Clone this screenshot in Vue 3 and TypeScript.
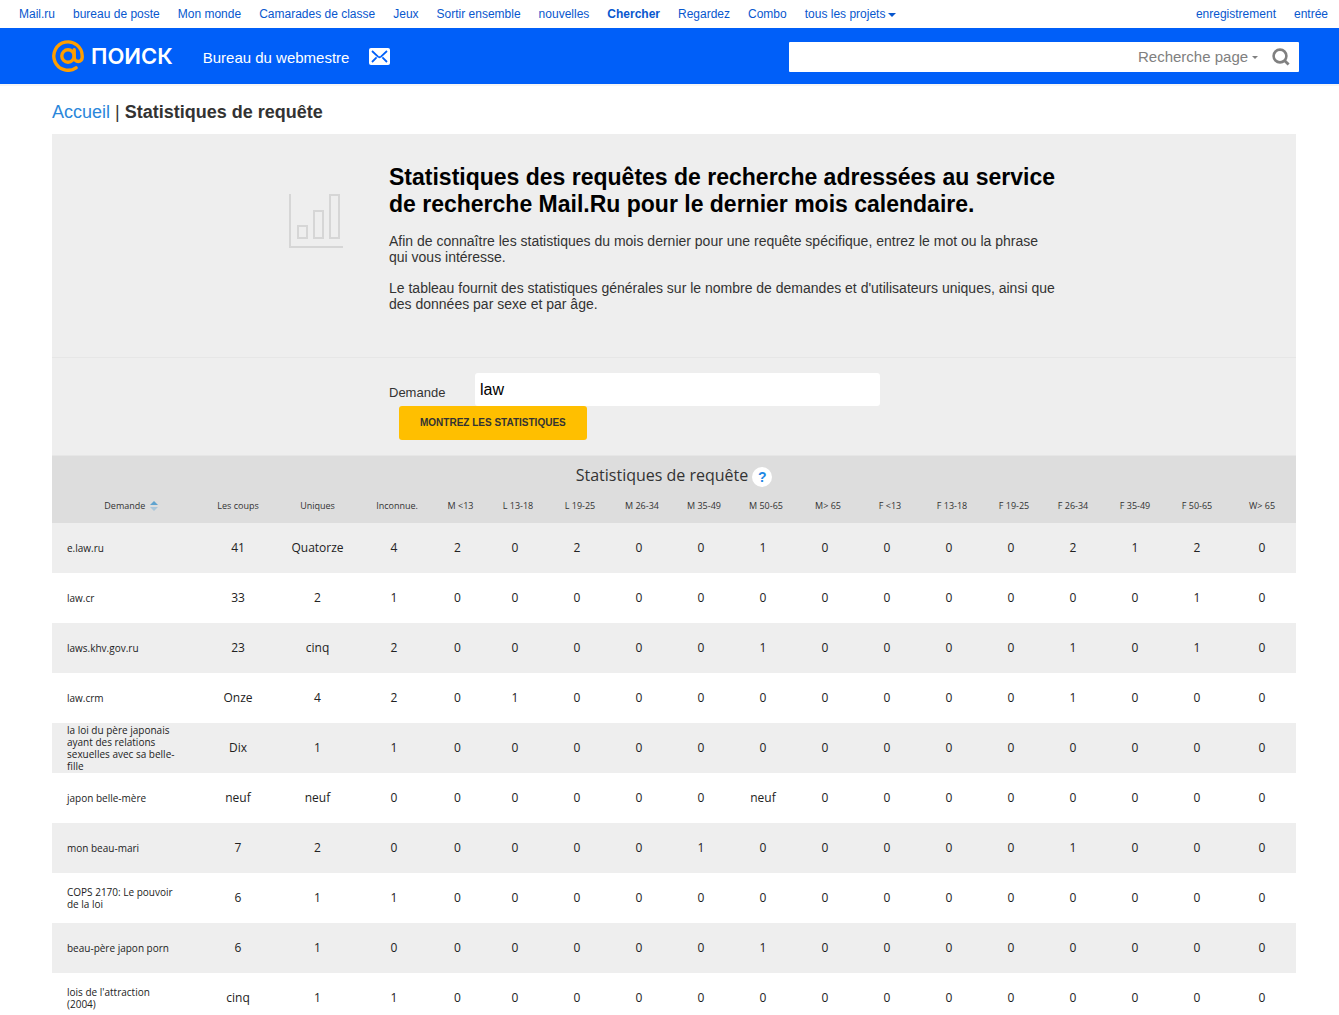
<script setup lang="ts">
import { ref } from 'vue'

const projects = ['Mail.ru', 'bureau de poste', 'Mon monde', 'Camarades de classe', 'Jeux', 'Sortir ensemble', 'nouvelles', 'Chercher', 'Regardez', 'Combo']
const account = ['enregistrement', 'entrée']

const scope = ref('page')
const search = ref('')
const query = ref('law')

const columns: { label: string; width: number; inset?: boolean }[] = [
  { label: 'Les coups', width: 80 },
  { label: 'Uniques', width: 79 },
  { label: 'Inconnue.', width: 74, inset: true },
  { label: 'M <13', width: 53, inset: true },
  { label: 'L 13-18', width: 62, inset: true },
  { label: 'L 19-25', width: 62, inset: true },
  { label: 'M 26-34', width: 62, inset: true },
  { label: 'M 35-49', width: 62, inset: true },
  { label: 'M 50-65', width: 62, inset: true },
  { label: 'M> 65', width: 62, inset: true },
  { label: 'F <13', width: 62, inset: true },
  { label: 'F 13-18', width: 62, inset: true },
  { label: 'F 19-25', width: 62, inset: true },
  { label: 'F 26-34', width: 62 },
  { label: 'F 35-49', width: 62 },
  { label: 'F 50-65', width: 62 },
  { label: 'W> 65', width: 68 },
]

const rows: { name: string; values: string[] }[] = [
  { name: 'e.law.ru', values: '41 Quatorze 4 2 0 2 0 0 1 0 0 0 0 2 1 2 0'.split(' ') },
  { name: 'law.cr', values: '33 2 1 0 0 0 0 0 0 0 0 0 0 0 0 1 0'.split(' ') },
  { name: 'laws.khv.gov.ru', values: '23 cinq 2 0 0 0 0 0 1 0 0 0 0 1 0 1 0'.split(' ') },
  { name: 'law.crm', values: 'Onze 4 2 0 1 0 0 0 0 0 0 0 0 1 0 0 0'.split(' ') },
  { name: 'la loi du père japonais ayant des relations sexuelles avec sa belle-fille', values: 'Dix 1 1 0 0 0 0 0 0 0 0 0 0 0 0 0 0'.split(' ') },
  { name: 'japon belle-mère', values: 'neuf neuf 0 0 0 0 0 0 neuf 0 0 0 0 0 0 0 0'.split(' ') },
  { name: 'mon beau-mari', values: '7 2 0 0 0 0 0 1 0 0 0 0 0 1 0 0 0'.split(' ') },
  { name: 'COPS 2170: Le pouvoir de la loi', values: '6 1 1 0 0 0 0 0 0 0 0 0 0 0 0 0 0'.split(' ') },
  { name: 'beau-père japon porn', values: '6 1 0 0 0 0 0 0 1 0 0 0 0 0 0 0 0'.split(' ') },
  { name: "lois de l'attraction (2004)", values: 'cinq 1 1 0 0 0 0 0 0 0 0 0 0 0 0 0 0'.split(' ') },
]
</script>

<template>
  <div class="page">
    <nav class="portal">
      <a v-for="p in projects" :key="p" href="#" :class="{ current: p === 'Chercher' }">{{ p }}</a>
      <a href="#" class="all">tous les projets<svg width="8" height="4" viewBox="0 0 8 4" aria-hidden="true"><path d="M0 0h8L4 4z" fill="currentColor" /></svg></a>
      <span class="spacer"></span>
      <a v-for="a in account" :key="a" href="#">{{ a }}</a>
    </nav>

    <header class="top">
      <a href="#" class="logo">
        <svg width="32" height="32" viewBox="0 0 32 32" fill="none" stroke="#ff9e00" stroke-width="3.4" aria-hidden="true">
          <circle cx="16" cy="16" r="6.2" />
          <path d="M22.2 9.8V17.5a4 4 0 0 0 8 0V16A14.2 14.2 0 1 0 24 27.8" stroke-linecap="round" />
        </svg>
        <span>ПОИСК</span>
      </a>
      <a href="#" class="product">Bureau du webmestre</a>
      <a href="#" class="mail" aria-label="Courrier">
        <svg width="22" height="17" viewBox="0 0 22 17" aria-hidden="true">
          <rect x="0" y="0" width="21" height="17" rx="2" fill="#fff" />
          <path d="M3 3l6 5.6q1.5 1.2 3 0L18 3M3 14l4.6-4.6M18 14l-4.6-4.6" fill="none" stroke="#005ff9" stroke-width="1.8" />
        </svg>
      </a>
      <form class="search" role="search" @submit.prevent>
        <input v-model="search" type="text" aria-label="Recherche" />
        <label class="scope">
          <select v-model="scope" aria-label="Type de recherche">
            <option value="page">Recherche page</option>
          </select>
          <svg width="6" height="3" viewBox="0 0 6 3" aria-hidden="true"><path d="M0 0h6L3 3z" fill="#808080" /></svg>
        </label>
        <button type="submit" aria-label="Chercher">
          <svg width="18" height="18" viewBox="0 0 18 18" fill="none" stroke="#808080" aria-hidden="true">
            <circle cx="8" cy="8" r="6.4" stroke-width="2.6" />
            <path d="M12 12l4.6 4.6" stroke-width="2.8" />
          </svg>
        </button>
      </form>
    </header>

    <main>
      <div class="crumbs"><a href="#">Accueil</a> | <strong>Statistiques de requête</strong></div>

      <section class="intro">
        <svg class="chart" width="54" height="54" viewBox="0 0 54 54" fill="none" stroke="#d6d6d6" stroke-width="2" aria-hidden="true">
          <path d="M1 0v53h53" />
          <rect x="9" y="32" width="9" height="12" />
          <rect x="25" y="17" width="9" height="27" />
          <rect x="41" y="1" width="9" height="43" />
        </svg>
        <div class="copy">
          <h1>Statistiques des requêtes de recherche adressées au service de recherche Mail.Ru pour le dernier mois calendaire.</h1>
          <p>Afin de connaître les statistiques du mois dernier pour une requête spécifique, entrez le mot ou la phrase qui vous intéresse.</p>
          <p>Le tableau fournit des statistiques générales sur le nombre de demandes et d'utilisateurs uniques, ainsi que des données par sexe et par âge.</p>
        </div>
      </section>

      <form class="ask" @submit.prevent>
        <div class="field">
          <label for="query">Demande</label>
          <input id="query" v-model="query" type="text" />
        </div>
        <button type="submit">MONTREZ LES STATISTIQUES</button>
      </form>

      <table>
        <caption>
          <div class="title">
            <span>Statistiques de requête</span>
            <button type="button" aria-label="Aide">?</button>
          </div>
        </caption>
        <colgroup>
          <col class="name" />
          <col v-for="c in columns" :key="c.label" :style="{ width: c.width + 'px' }" />
        </colgroup>
        <thead>
          <tr>
            <th scope="col" class="first">
              Demande
              <svg width="8" height="10" viewBox="0 0 8 10" aria-hidden="true">
                <path d="M0 4h8L4 0z" fill="#5fa3cf" />
                <path d="M0 6h8L4 10z" fill="#a9c6da" />
              </svg>
            </th>
            <th v-for="c in columns" :key="c.label" scope="col" :class="{ inset: c.inset }">{{ c.label }}</th>
          </tr>
        </thead>
        <tbody>
          <tr v-for="r in rows" :key="r.name">
            <th scope="row">{{ r.name }}</th>
            <td v-for="(v, i) in r.values" :key="i">{{ v }}</td>
          </tr>
        </tbody>
      </table>
    </main>
  </div>
</template>

<style>
body {
  margin: 0;
  background: #fff;
}
</style>

<style scoped>
.page {
  font-family: "Liberation Sans", Arial, sans-serif;
  color: #333;
}
a {
  text-decoration: none;
}
button,
input,
select {
  font-family: inherit;
  border: 0;
  margin: 0;
  padding: 0;
  outline: 0;
}
svg {
  flex: none;
}

.portal {
  display: flex;
  align-items: center;
  gap: 18px;
  height: 28px;
  padding: 0 11px 0 19px;
  font-size: 12px;
  white-space: nowrap;
}
.portal a {
  color: #0857ce;
}
.portal .current {
  font-weight: bold;
}
.all svg {
  margin-left: 3px;
  vertical-align: 1px;
}
.spacer {
  flex: 1;
}

.top {
  display: flex;
  align-items: center;
  height: 56px;
  padding: 0 40px 0 52px;
  background: #005ff9;
  border-bottom: 2px solid #f5f5f5;
}
.logo {
  display: flex;
  align-items: center;
  gap: 7px;
  color: #fff;
  font: 600 22px Inter, sans-serif;
}
.product {
  margin: 3px 20px 0 30px;
  color: #fff;
  font-size: 15px;
}
.mail {
  display: flex;
}
.search {
  display: flex;
  align-items: center;
  width: 510px;
  height: 30px;
  margin: 2px 0 0 auto;
  background: #fff;
  border-radius: 1px;
}
.search input {
  flex: 1;
  min-width: 0;
  height: 30px;
  padding: 0 8px;
  background: transparent;
  font-size: 15px;
}
.scope {
  display: flex;
  align-items: center;
  gap: 3px;
}
.scope select {
  appearance: none;
  background: transparent;
  color: #808080;
  font-size: 15px;
  height: 30px;
  padding-bottom: 2px;
}
.search button {
  display: flex;
  margin: 0 9px 0 14px;
  background: none;
}

main {
  padding: 0 43px 0 52px;
}
.crumbs {
  padding: 16px 0 11px;
  font-size: 18px;
  line-height: 21px;
}
.crumbs a {
  color: #2b87db;
}

.intro {
  display: grid;
  grid-template-columns: 54px 670px;
  column-gap: 46px;
  padding: 30px 0 45px 237px;
  background: #eee;
}
.chart {
  margin-top: 30px;
}
.copy h1 {
  margin: 0 0 15px;
  color: #000;
  font-size: 23px;
  line-height: 27px;
}
.copy p {
  margin: 0 0 15px;
  font-size: 14px;
  line-height: 16px;
}
.copy p:last-child {
  margin: 0;
}

.ask {
  padding: 15px 0 15px 337px;
  background: #eee;
  border-top: 1px solid #e6e6e6;
  border-bottom: 1px solid #e6e6e6;
}
.field {
  display: flex;
  align-items: center;
}
.field label {
  width: 86px;
  padding-top: 6px;
  font-size: 13px;
}
.field input {
  width: 405px;
  height: 33px;
  padding: 0 5px;
  box-sizing: border-box;
  border-radius: 3px;
  background: #fff;
  color: #000;
  font-size: 16px;
}
.ask button {
  display: block;
  height: 34px;
  margin-left: 10px;
  padding: 0 21px 2px;
  border-radius: 3px;
  background: #ffbf00;
  color: #333;
  font-size: 10px;
  font-weight: bold;
}

table {
  width: 100%;
  table-layout: fixed;
  border-collapse: collapse;
  font-family: "Open Sans", "Noto Sans", sans-serif;
}
.name {
  width: 146px;
}
caption {
  background: #ddd;
}
.title {
  display: flex;
  align-items: flex-end;
  justify-content: center;
  gap: 4px;
  height: 33px;
  padding-bottom: 2px;
  box-sizing: border-box;
  font-size: 16px;
  line-height: 24px;
}
.title button {
  width: 20px;
  height: 20px;
  border-radius: 50%;
  background: #fff;
  color: #1e88e5;
  font-family: "Liberation Sans", Arial, sans-serif;
  font-size: 14px;
  font-weight: bold;
}
th,
td {
  padding: 0;
  font-weight: normal;
}
thead th {
  height: 32px;
  padding-bottom: 2px;
  background: #ddd;
  font-size: 9px;
  white-space: nowrap;
}
thead .inset {
  padding-left: 6px;
}
thead .first {
  padding-left: 12px;
}
.first svg {
  margin-left: 2px;
  vertical-align: -2px;
}
tbody tr:nth-child(odd) {
  background: #eee;
}
tbody td {
  height: 48px;
  padding-bottom: 2px;
  text-align: center;
  color: #222;
  font-size: 12px;
}
tbody th {
  padding: 0 19px 0 15px;
  text-align: left;
  color: #222;
  font-size: 10px;
  line-height: 12px;
}
</style>
